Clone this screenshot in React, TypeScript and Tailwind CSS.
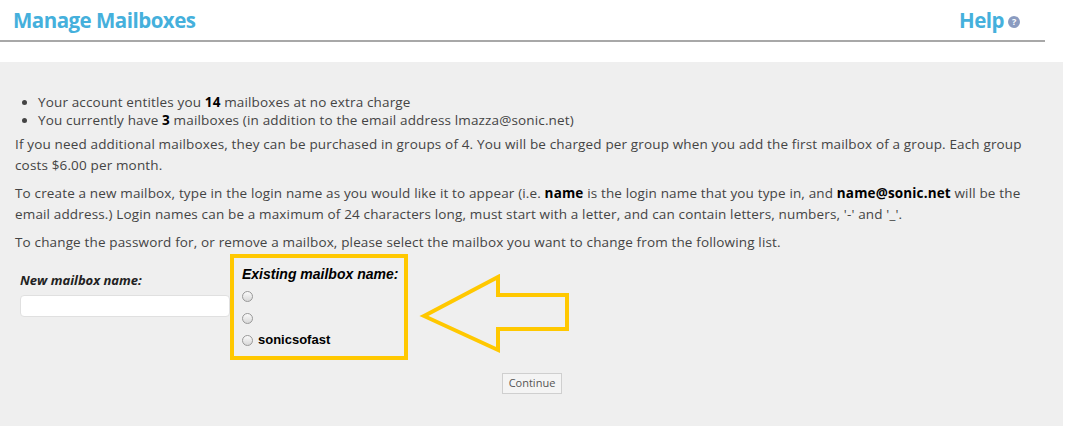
export default function App() {
  return (
    <div className="w-[1065px] h-[426px] bg-white overflow-hidden text-[13.5px] tracking-[0.15px] text-[#444]" style={{ fontFamily: '"Open Sans", "Liberation Sans", sans-serif' }}>
      {/* header */}
      <div className="h-[42px] flex items-center justify-between pl-[13px] pr-[25px] w-[1045px] border-b-2 border-[#a8a8a8]">
        <h1 className="text-[20.5px] font-bold text-[#45b0dc] tracking-tight">Manage Mailboxes</h1>
        <div className="flex items-center gap-1 text-[20.5px] font-bold text-[#45b0dc] tracking-tight">
          Help
          <span className="w-[12px] h-[12px] rounded-full bg-[#8a9bc0] text-white text-[9px] leading-[12px] text-center mt-1">?</span>
        </div>
      </div>

      <div className="mt-[20px] w-[1063px] h-[364px] bg-[#efefef] px-[15px] pt-[31px]">
        <ul className="list-disc pl-[23px] leading-[18px]">
          <li>Your account entitles you <b className="text-black">14</b> mailboxes at no extra charge</li>
          <li>You currently have <b className="text-black">3</b> mailboxes (in addition to the email address lmazza@sonic.net)</li>
        </ul>
        <p className="mt-[5px] leading-[21px]">If you need additional mailboxes, they can be purchased in groups of 4. You will be charged per group when you add the first mailbox of a group. Each group costs $6.00 per month.</p>
        <p className="mt-[7px] leading-[21px]">To create a new mailbox, type in the login name as you would like it to appear (i.e. <b className="text-black">name</b> is the login name that you type in, and <b className="text-black">name@sonic.net</b> will be the email address.) Login names can be a maximum of 24 characters long, must start with a letter, and can contain letters, numbers, '-' and '_'.</p>
        <p className="mt-[7px] leading-[21px]">To change the password for, or remove a mailbox, please select the mailbox you want to change from the following list.</p>

        <div className="flex mt-[1px]">
          <div className="w-[215px] pt-[17px] pl-[5px]">
            <div className="font-bold italic text-[#222] text-[13px] tracking-normal">New mailbox name:</div>
            <div className="mt-[4px] h-[22px] w-[210px] bg-white border border-[#e0e0e0] rounded-sm" />
          </div>
          <div className="w-[178px] h-[106px] border-4 border-[#ffc800] pl-[8px] pt-[6px] text-black tracking-normal">
            <div className="font-bold italic text-[14px]" style={{ fontFamily: '"Liberation Sans", sans-serif' }}>Existing mailbox name:</div>
            {["", "", "sonicsofast"].map((n, i) => (
              <div key={i} className="flex items-center gap-[5px] h-[22px]">
                <span className="w-[11px] h-[11px] rounded-full border border-[#999] bg-gradient-to-b from-[#fafafa] to-[#d8d8d8]" />
                <span className="font-bold text-[13px]" style={{ fontFamily: '"Liberation Sans", sans-serif' }}>{n}</span>
              </div>
            ))}
          </div>
          <svg width="160" height="80" viewBox="0 0 160 80" className="mt-[20px] ml-[8px]">
            <polygon points="8,42 82,3 82,21 151,21 151,55 82,55 82,76" fill="none" stroke="#ffc800" strokeWidth="4" strokeLinejoin="miter" />
          </svg>
        </div>

        <div className="flex mt-[13px] pl-[487px]">
          <button className="h-[21px] w-[60px] text-[11px] tracking-normal text-[#555] bg-[#f4f4f4] border border-[#cfcfcf]">Continue</button>
        </div>
      </div>
    </div>
  );
}
